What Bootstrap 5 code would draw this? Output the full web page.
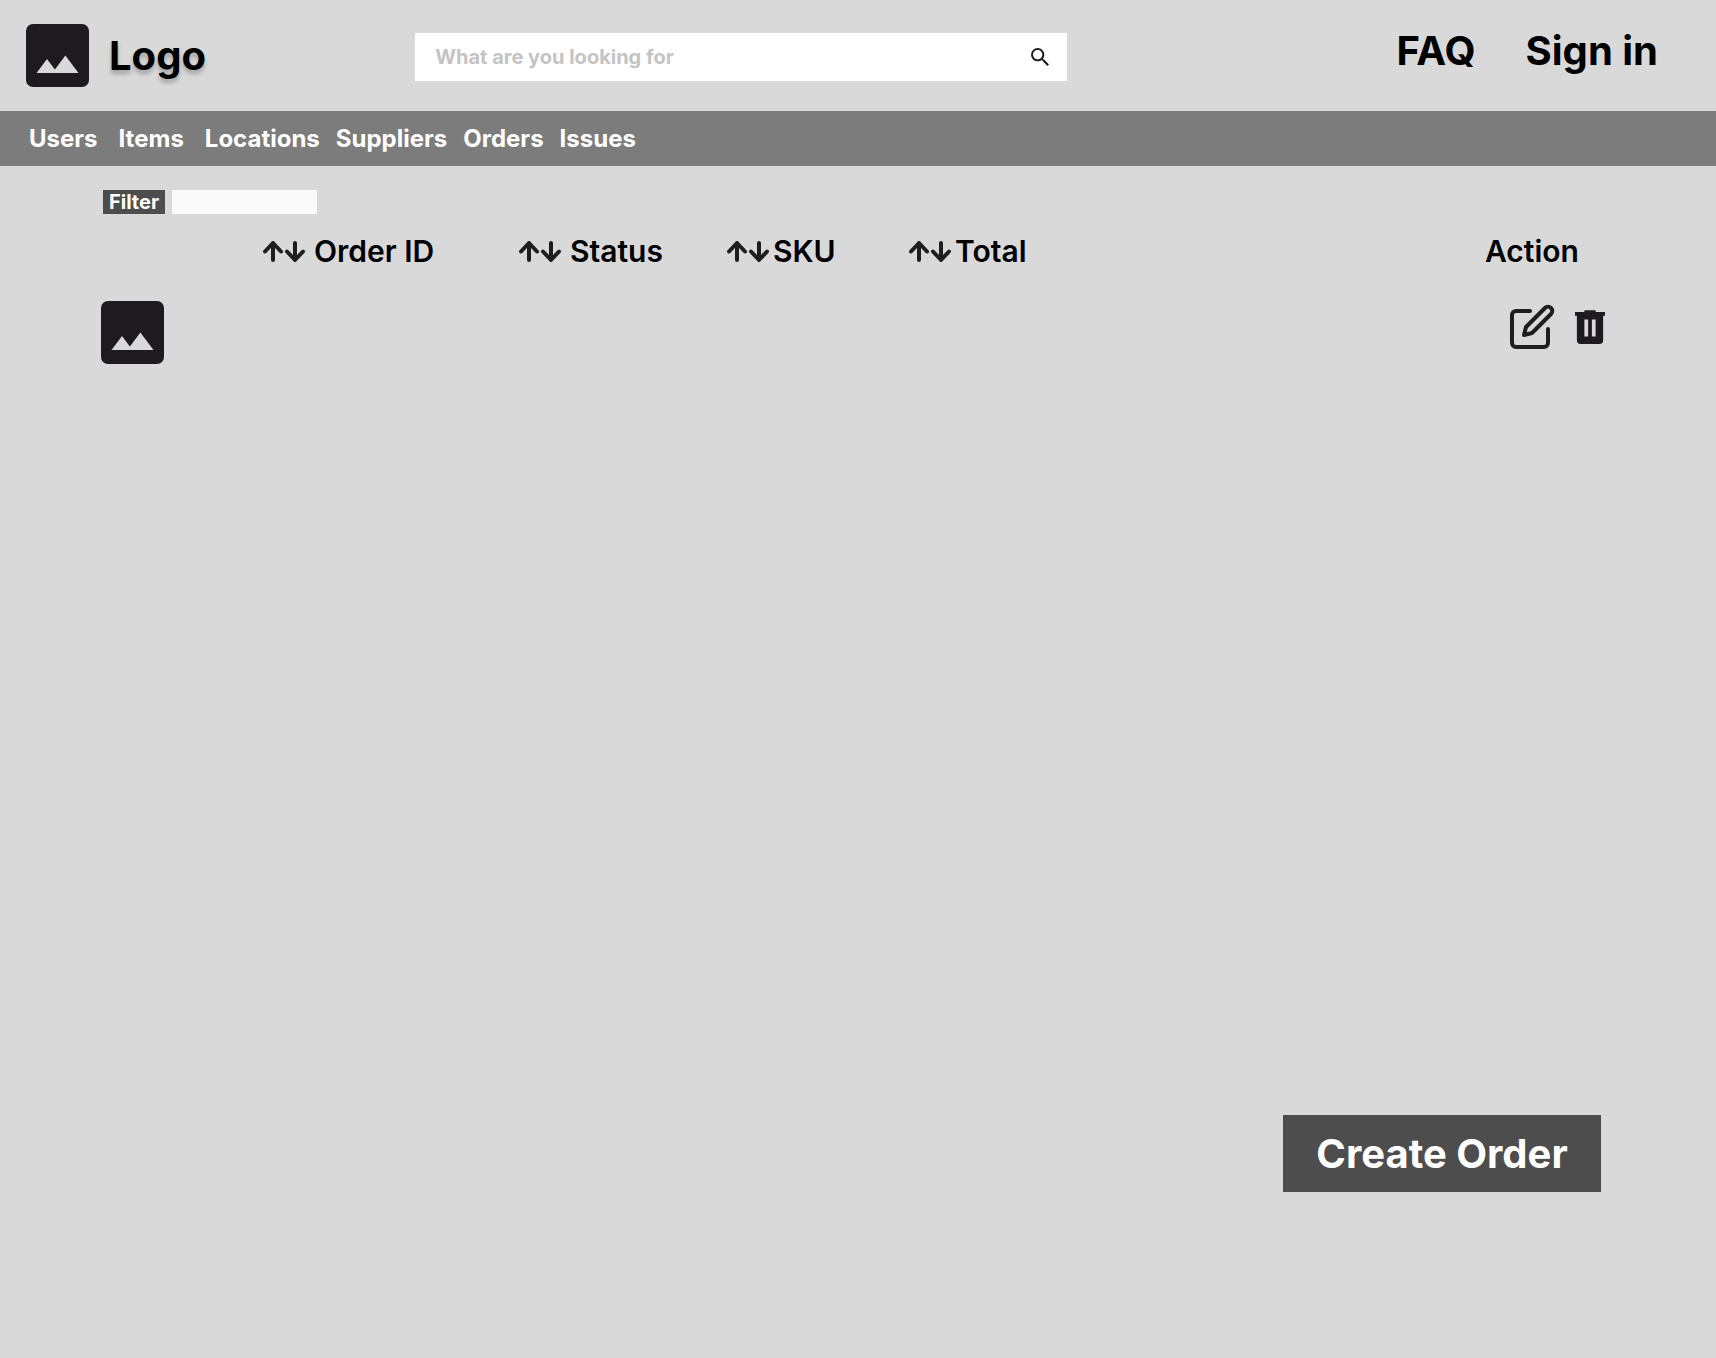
<!DOCTYPE html>
<html lang="en">
<head>
<meta charset="utf-8">
<meta name="viewport" content="width=device-width, initial-scale=1">
<title>Orders</title>
<link href="https://cdn.jsdelivr.net/npm/bootstrap@5.3.0/dist/css/bootstrap.min.css" rel="stylesheet">
<style>
  body { background: #d9d9d9; color: #000; font-family: Inter, "Liberation Sans", sans-serif; }
  a { color: inherit; text-decoration: none; }
  svg { display: block; flex: none; }
  .plain { border: 0; border-radius: 0; background: none; padding: 0; }
  .site-header { min-height: 111px; }
  .brand { flex: 0 0 24.2%; padding-left: 26px; gap: 20px; }
  .display-text { font-size: 40px; font-weight: 700; line-height: 48px; }
  .brand-name { text-shadow: 0 4px 4px rgba(0, 0, 0, .25); }
  .search-form { flex: 0 0 38%; height: 48px; margin-top: 3px; background: #fff; padding: 0 18px 0 20px; }
  .search-form input { font-size: 20px; font-weight: 700; line-height: 24px; color: #000; }
  .search-form input::placeholder { color: #c4c4c4; opacity: 1; }
  .account-links { gap: 50px; padding: 0 58px 10px 0; }
  .main-nav { background: #7c7c7c; color: #fff; min-height: 55px; padding-left: 29px; font-size: 24px; font-weight: 700; line-height: 28px; }
  .wide-gap { gap: 21px; }
  .tight-gap { gap: 16px; }
  .content { padding: 24px 111px 166px 101px; }
  .filter-bar { gap: 7px; margin-left: 2px; }
  .filter-bar label { width: 62px; background: #4d4d4d; color: #fff; font-size: 20px; font-weight: 700; line-height: 24px; }
  .filter-bar input { width: 145px; height: 24px; background: #fafafa; }
  .orders { width: 100%; table-layout: fixed; margin-top: 19px; }
  .orders th { font-size: 30px; font-weight: 600; line-height: 36px; padding: 0 0 32px; }
  .orders td { padding: 0; vertical-align: top; }
  .col-thumb { width: 162px; }
  .col-id { width: 256px; }
  .col-status { width: 208px; }
  .col-sku { width: 182px; }
  .col-action { width: 120px; }
  .sort { font: inherit; color: inherit; gap: 9px; white-space: nowrap; }
  .sort-close { gap: 4px; }
  .row-actions { padding: 2px 0 0 23px; gap: 19px; }
  .create-btn { background: #4d4d4d; color: #fff; width: 318px; height: 77px; margin-right: 4px; }
</style>
<script src="https://cdn.jsdelivr.net/npm/bootstrap@5.3.0/dist/js/bootstrap.bundle.min.js"></script>
</head>
<body class="d-flex flex-column min-vh-100">

<svg width="0" height="0" class="position-absolute" aria-hidden="true">
  <symbol id="picture" viewBox="0 0 18 18">
    <path fill="#1d1b20" fill-rule="evenodd" d="M2 0h14a2 2 0 0 1 2 2v14a2 2 0 0 1-2 2H2a2 2 0 0 1-2-2V2a2 2 0 0 1 2-2zM3 14h12l-3.75-5-3 4L6 10z"/>
  </symbol>
  <symbol id="sort-arrows" viewBox="0 0 42 21">
    <path fill="none" stroke="#1e1e1e" stroke-width="4" stroke-linecap="round" stroke-linejoin="round" d="M10 19V2M2 10.500l8-8.500 8 8.500M32 2v17M24 10.500l8 8.500 8-8.500"/>
  </symbol>
</svg>

<header class="site-header d-flex align-items-center">
  <a href="#" class="brand d-flex align-items-center">
    <svg width="63" height="63" aria-hidden="true"><use href="#picture"/></svg>
    <span class="brand-name display-text">Logo</span>
  </a>
  <form class="search-form d-flex align-items-center" role="search">
    <input type="search" class="form-control plain shadow-none flex-grow-1" placeholder="What are you looking for" aria-label="Search">
    <button type="button" class="plain" aria-label="Search">
      <svg width="18" height="18" viewBox="3 3 17.500 17.500"><path fill="#1d1b20" d="M15.500 14h-.79l-.28-.27A6.471 6.471 0 0 0 16 9.500 6.500 6.500 0 1 0 9.500 16c1.610 0 3.090-.59 4.230-1.570l.27.28v.79l5 4.990L20.490 19l-4.990-5zm-6 0C7.010 14 5 11.990 5 9.500S7.010 5 9.500 5 14 7.010 14 9.500 11.990 14 9.500 14z"/></svg>
    </button>
  </form>
  <div class="account-links display-text d-flex ms-auto">
    <a href="#">FAQ</a>
    <a href="#">Sign in</a>
  </div>
</header>

<nav class="main-nav d-flex align-items-center tight-gap" aria-label="Main">
  <div class="d-flex wide-gap">
    <a href="#">Users</a>
    <a href="#">Items</a>
    <a href="#">Locations</a>
  </div>
  <a href="#">Suppliers</a>
  <a href="#">Orders</a>
  <a href="#">Issues</a>
</nav>

<main class="content d-flex flex-column flex-grow-1">
  <div class="filter-bar d-flex">
    <label for="filter" class="text-center">Filter</label>
    <input id="filter" type="text" class="plain">
  </div>

  <table class="orders">
    <colgroup>
      <col class="col-thumb"><col class="col-id"><col class="col-status"><col class="col-sku"><col><col class="col-action">
    </colgroup>
    <thead>
      <tr>
        <td></td>
        <th scope="col"><button type="button" class="plain sort d-flex align-items-center"><svg width="42" height="21" aria-hidden="true"><use href="#sort-arrows"/></svg>Order ID</button></th>
        <th scope="col"><button type="button" class="plain sort d-flex align-items-center"><svg width="42" height="21" aria-hidden="true"><use href="#sort-arrows"/></svg>Status</button></th>
        <th scope="col"><button type="button" class="plain sort sort-close d-flex align-items-center"><svg width="42" height="21" aria-hidden="true"><use href="#sort-arrows"/></svg>SKU</button></th>
        <th scope="col"><button type="button" class="plain sort sort-close d-flex align-items-center"><svg width="42" height="21" aria-hidden="true"><use href="#sort-arrows"/></svg>Total</button></th>
        <th scope="col">Action</th>
      </tr>
    </thead>
    <tbody>
      <tr>
        <td><svg width="63" height="63" role="img" aria-label="Item picture"><use href="#picture"/></svg></td>
        <td></td><td></td><td></td><td></td>
        <td>
          <div class="row-actions d-flex align-items-center">
            <button type="button" class="plain" aria-label="Edit">
              <svg width="48" height="48" viewBox="0 0 24 24" fill="none" stroke="#1e1e1e" stroke-width="2" stroke-linecap="round" stroke-linejoin="round"><path d="M11 4H4a2 2 0 0 0-2 2v14a2 2 0 0 0 2 2h14a2 2 0 0 0 2-2v-7"/><path d="M18.500 2.500a2.121 2.121 0 0 1 3 3L12 15l-4 1 1-4 9.500-9.500z"/></svg>
            </button>
            <button type="button" class="plain" aria-label="Delete">
              <svg width="30" height="34" viewBox="4 3 16 18"><path fill="#1d1b20" fill-rule="evenodd" d="M7 21a2 2 0 0 1-2-2V6H4V4h5V3h6v1h5v2h-1v13a2 2 0 0 1-2 2zM9 17h2V8H9zM13 17h2V8h-2z"/></svg>
            </button>
          </div>
        </td>
      </tr>
    </tbody>
  </table>

  <button type="button" class="create-btn plain display-text mt-auto align-self-end">Create Order</button>
</main>
</body>
</html>
